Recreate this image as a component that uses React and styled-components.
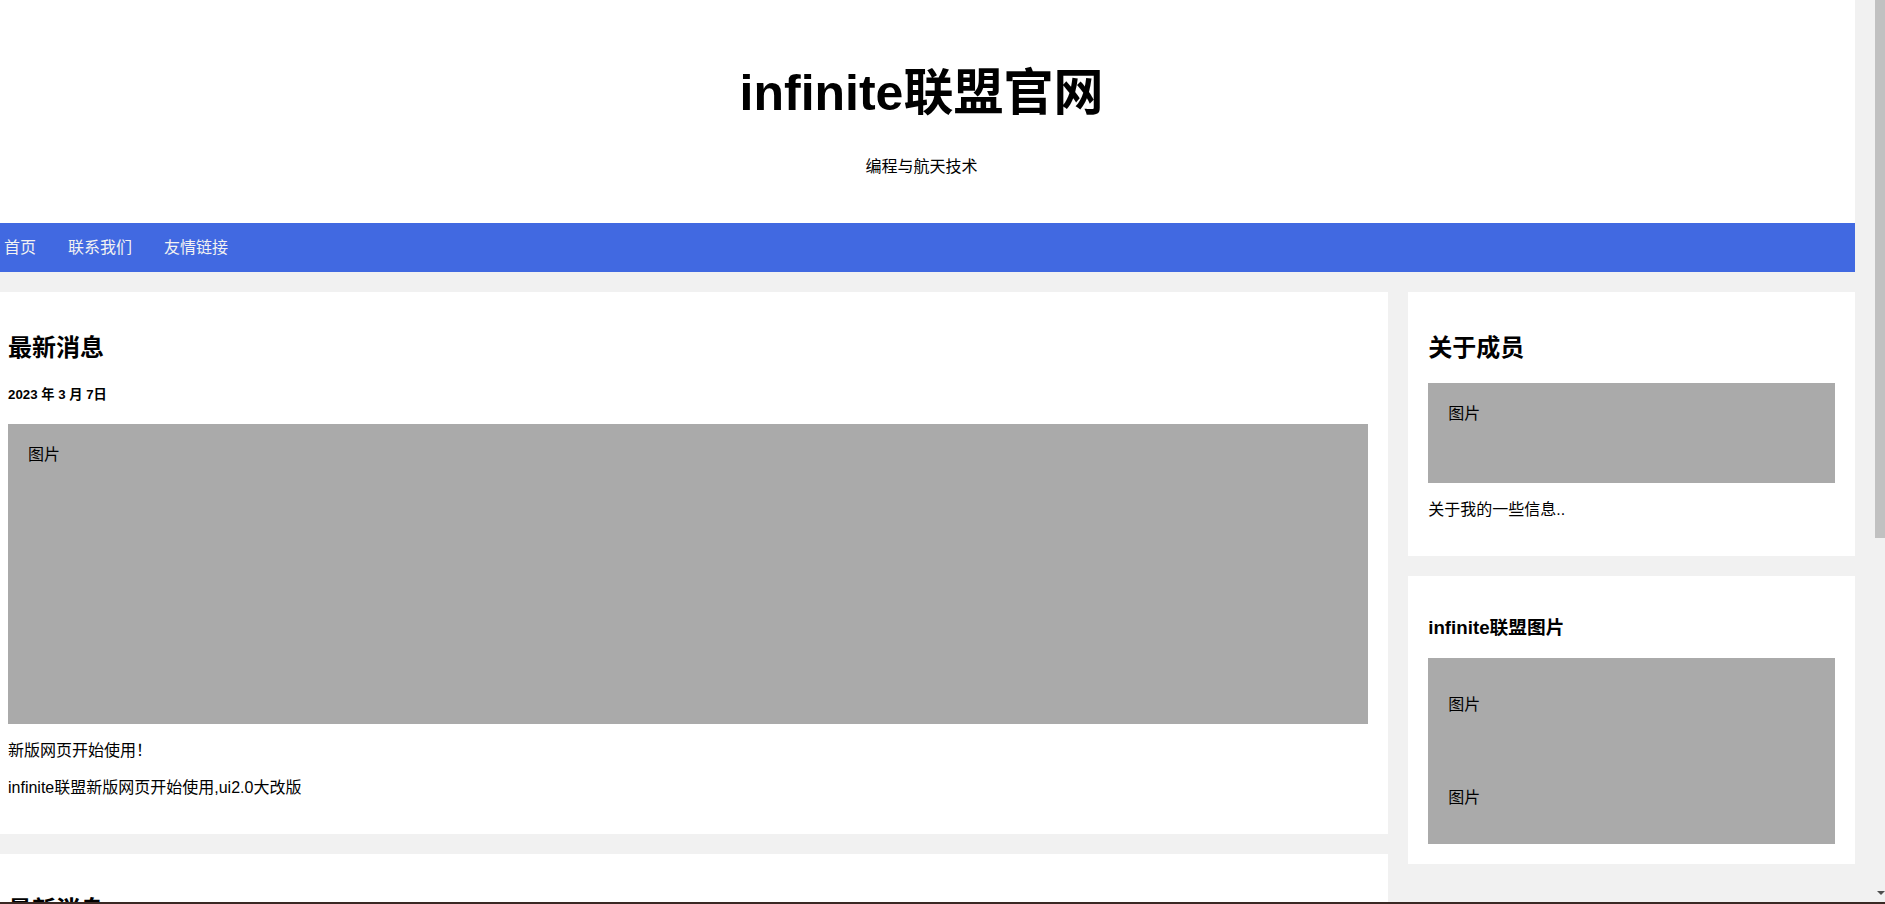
import React from "react";
import styled, { createGlobalStyle } from "styled-components";

const GlobalStyle = createGlobalStyle`
  * { box-sizing: border-box; }
  html, body {
    margin: 0;
    padding: 0;
    height: 100%;
    overflow: hidden;
  }
  body {
    font-family: "Liberation Sans", Arial, "Noto Sans CJK SC", sans-serif;
    font-size: 16px;
    color: #000;
    background: #f1f1f1;
  }
  #root { height: 100%; }
`;

const Frame = styled.div`
  display: flex;
  flex-direction: column;
  height: 100vh;
`;

const Viewport = styled.div`
  flex: 1;
  min-height: 0;
  display: flex;
`;

const Page = styled.div`
  flex: 1;
  min-width: 0;
  overflow: hidden;
  background: #f1f1f1;
`;

const Site = styled.div`
  margin: 0 15px 0 -12px;
`;

const Header = styled.header`
  background: #fff;
  padding: 30px;
  text-align: center;
`;

const Title = styled.h1`
  margin: 30px 0;
  font-size: 50px;
  line-height: 66px;
  font-weight: bold;
`;

const Tagline = styled.p`
  margin: 0 0 16px;
  font-size: 16px;
  line-height: 21px;
`;

const TopNav = styled.nav`
  display: flex;
  background: #4169e1;
`;

const NavLink = styled.a`
  display: block;
  padding: 14px 16px;
  color: #f2f2f2;
  text-decoration: none;
  font-size: 16px;
  line-height: 21px;
`;

const Row = styled.div`
  display: flex;
  align-items: flex-start;
`;

const LeftColumn = styled.div`
  width: 75%;
`;

const RightColumn = styled.div`
  width: 25%;
  padding-left: 20px;
`;

const Card = styled.section`
  background: #fff;
  padding: 20px;
  margin-top: 20px;
`;

const CardTitle = styled.h2`
  margin: 20px 0 19px;
  font-size: 24px;
  line-height: 32px;
  font-weight: bold;
`;

const SideTitle = styled.h3`
  margin: 19px 0 18px;
  font-size: 18.72px;
  line-height: 25px;
  font-weight: bold;
`;

const DateLine = styled.h5`
  margin: 22px 0 21px;
  font-size: 13.28px;
  line-height: 17px;
  font-weight: bold;
`;

const FakeImg = styled.div`
  background: #aaa;
  width: 100%;
  padding: 20px;
  line-height: 21px;
  height: ${(p) => (p.$height ? `${p.$height}px` : "auto")};
`;

const Text = styled.p`
  margin: 16px 0;
  font-size: 16px;
  line-height: 21px;
`;

const ScrollTrack = styled.div`
  width: 15px;
  flex-shrink: 0;
  background: #f1f1f1;
  display: flex;
  flex-direction: column;
  justify-content: space-between;
  align-items: flex-end;
`;

const Thumb = styled.div`
  width: 10px;
  height: 538px;
  background: #c1c1c1;
`;

const ArrowDown = styled.svg`
  display: block;
  margin-bottom: 7px;
`;

const BottomEdge = styled.div`
  height: 2px;
  background: #3a2924;
`;

function NewsCard() {
  return (
    <Card>
      <CardTitle>最新消息</CardTitle>
      <DateLine>2023 年 3 月 7日</DateLine>
      <FakeImg $height={300}>图片</FakeImg>
      <Text>新版网页开始使用！</Text>
      <Text>infinite联盟新版网页开始使用,ui2.0大改版</Text>
    </Card>
  );
}

export default function App() {
  return (
    <>
      <GlobalStyle />
      <Frame>
        <Viewport>
          <Page>
            <Site>
              <Header>
                <Title>infinite联盟官网</Title>
                <Tagline>编程与航天技术</Tagline>
              </Header>
              <TopNav>
                <NavLink href="#">首页</NavLink>
                <NavLink href="#">联系我们</NavLink>
                <NavLink href="#">友情链接</NavLink>
              </TopNav>
              <Row>
                <LeftColumn>
                  <NewsCard />
                  <NewsCard />
                </LeftColumn>
                <RightColumn>
                  <Card>
                    <CardTitle>关于成员</CardTitle>
                    <FakeImg $height={100}>图片</FakeImg>
                    <Text>关于我的一些信息..</Text>
                  </Card>
                  <Card>
                    <SideTitle>infinite联盟图片</SideTitle>
                    <FakeImg>
                      <Text>图片</Text>
                    </FakeImg>
                    <FakeImg>
                      <Text>图片</Text>
                    </FakeImg>
                  </Card>
                </RightColumn>
              </Row>
            </Site>
          </Page>
          <ScrollTrack>
            <Thumb />
            <ArrowDown width="8" height="4" viewBox="0 0 8 4">
              <polygon points="0,0 8,0 4,4" fill="#505050" />
            </ArrowDown>
          </ScrollTrack>
        </Viewport>
        <BottomEdge />
      </Frame>
    </>
  );
}
